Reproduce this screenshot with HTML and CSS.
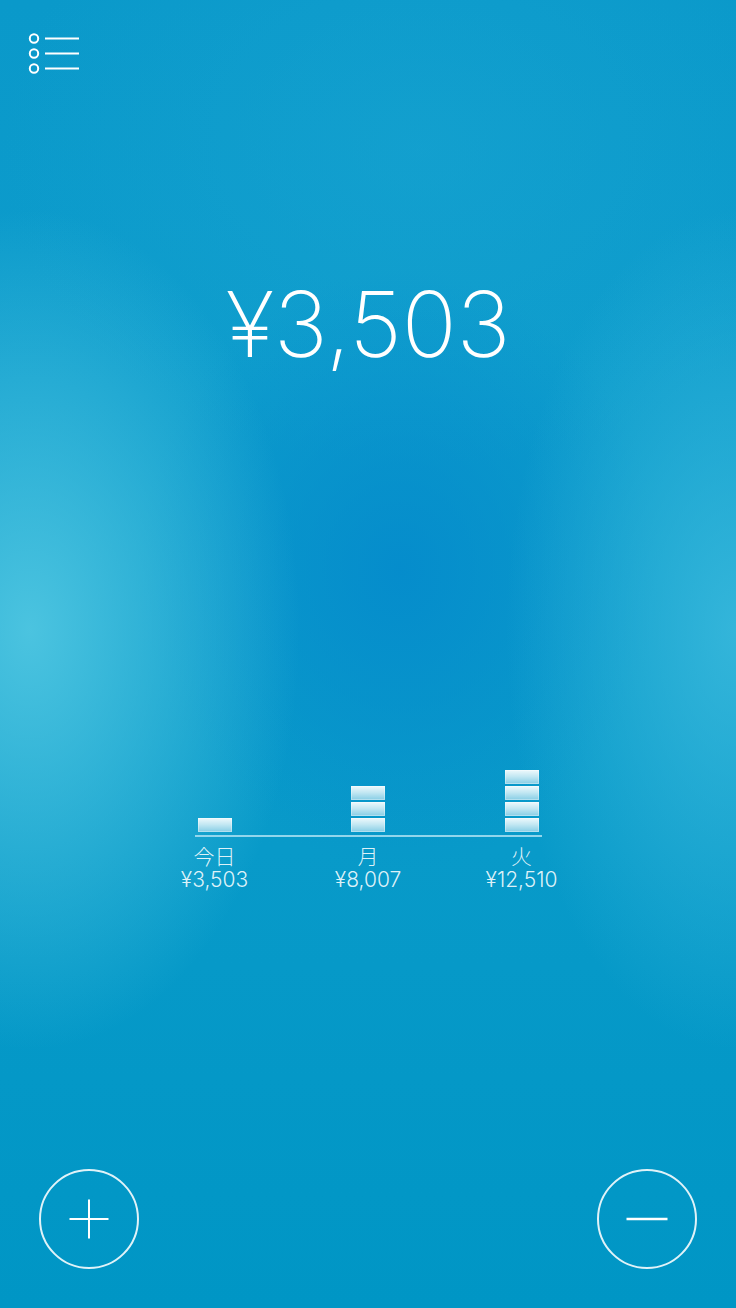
FILE: index.html
```html
<!DOCTYPE html>
<html lang="ja">
<head>
<meta charset="utf-8">
<title>Wallet</title>
<link rel="stylesheet" href="styles.css">
</head>
<body>
<div class="screen">
  <header class="top">
    <button class="menu" aria-label="menu">
      <svg width="54" height="44" viewBox="0 0 54 44">
        <g fill="none" stroke="#fff" stroke-width="2">
          <circle cx="6" cy="7.5" r="4.2"/>
          <circle cx="6" cy="22.5" r="4.2"/>
          <circle cx="6" cy="37.5" r="4.2"/>
          <line x1="17" y1="7.5" x2="51" y2="7.5"/>
          <line x1="17" y1="22.5" x2="51" y2="22.5"/>
          <line x1="17" y1="37.5" x2="51" y2="37.5"/>
        </g>
      </svg>
    </button>
  </header>

  <div class="total">¥3,503</div>

  <section class="chart">
    <div class="bars">
      <div class="col"><span class="seg"></span></div>
      <div class="col"><span class="seg"></span><span class="seg"></span><span class="seg"></span></div>
      <div class="col"><span class="seg"></span><span class="seg"></span><span class="seg"></span><span class="seg"></span></div>
    </div>
    <div class="axis"></div>
    <div class="labels">
      <div class="label"><span>今日</span><span>¥3,503</span></div>
      <div class="label"><span>月</span><span>¥8,007</span></div>
      <div class="label"><span>火</span><span>¥12,510</span></div>
    </div>
  </section>

  <footer class="actions">
    <button class="round" aria-label="add">
      <svg width="40" height="40" viewBox="0 0 40 40">
        <g stroke="#fff" stroke-width="2">
          <line x1="0.5" y1="20" x2="39.5" y2="20"/>
          <line x1="20" y1="0.5" x2="20" y2="39.5"/>
        </g>
      </svg>
    </button>
    <button class="round" aria-label="subtract">
      <svg width="42" height="40" viewBox="0 0 42 40">
        <line x1="0.5" y1="20" x2="41.5" y2="20" stroke="#fff" stroke-width="2.4"/>
      </svg>
    </button>
  </footer>
</div>
</body>
</html>
```

FILE: styles.css
```css
* { box-sizing: border-box; }

html, body {
  margin: 0;
  padding: 0;
}

body {
  width: 736px;
  height: 1308px;
  overflow: hidden;
  font-family: Inter, "Noto Sans CJK JP", sans-serif;
  color: #fff;
  background:
    radial-gradient(ellipse 270px 420px at 30px 630px, rgba(82, 200, 226, 0.9), rgba(82, 200, 226, 0) 100%),
    radial-gradient(ellipse 230px 420px at 736px 630px, rgba(62, 188, 222, 0.8), rgba(62, 188, 222, 0) 100%),
    radial-gradient(ellipse 260px 300px at 400px 570px, rgba(4, 138, 204, 0.85), rgba(4, 138, 204, 0) 100%),
    radial-gradient(ellipse 420px 320px at 420px 150px, rgba(30, 168, 212, 0.4), rgba(30, 168, 212, 0) 100%),
    linear-gradient(180deg, #0a99ca 0%, #0d9ccc 30%, #089ac9 65%, #0096c5 100%);
}

.screen {
  height: 1308px;
  display: flex;
  flex-direction: column;
}

button {
  background: none;
  border: 0;
  padding: 0;
  margin: 0;
  cursor: pointer;
  display: block;
}

.top {
  padding: 31px 0 0 28px;
  height: 100px;
}

.menu svg { display: block; }

.total {
  margin-top: 179px;
  text-align: center;
  font-size: 91px;
  font-weight: 200;
  line-height: 1;
  letter-spacing: -0.2px;
  height: 100px;
}

.chart {
  margin-top: 389px;
  display: flex;
  flex-direction: column;
  align-items: center;
}

.bars,
.labels {
  display: grid;
  grid-template-columns: repeat(3, 153.5px);
}

.bars .col {
  display: flex;
  flex-direction: column;
  align-items: center;
  justify-content: flex-end;
  gap: 2px;
  height: 64px;
}

.seg {
  display: block;
  width: 34px;
  height: 14px;
  background: linear-gradient(180deg, #eef9fc 0%, #c4e8f3 45%, #86cde5 100%);
  box-shadow: inset 0 0 0 1px rgba(255, 255, 255, 0.35);
}

.axis {
  width: 347px;
  height: 2px;
  margin-top: 3px;
  background: rgba(170, 225, 242, 0.85);
}

.labels {
  margin-top: 8px;
}

.label {
  display: flex;
  flex-direction: column;
  align-items: center;
  font-size: 21px;
  font-weight: 300;
  line-height: 23px;
  color: rgba(235, 248, 252, 0.95);
}

.actions {
  margin-top: auto;
  padding: 0 39px 39px 39px;
  display: flex;
  justify-content: space-between;
}

.round {
  width: 100px;
  height: 100px;
  border-radius: 50%;
  border: 2px solid rgba(255, 255, 255, 0.88);
  display: flex;
  align-items: center;
  justify-content: center;
}

.round svg { display: block; }
```
